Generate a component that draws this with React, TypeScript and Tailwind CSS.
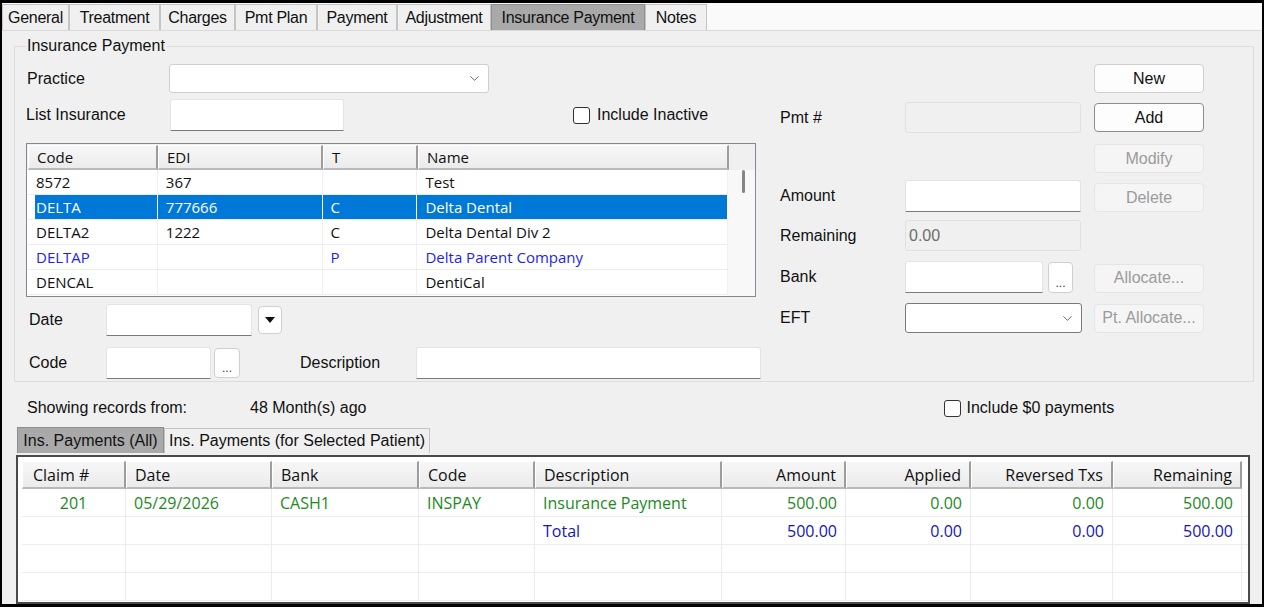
import { ChevronDown } from "lucide-react";

const tabs = [
  { label: "General", w: "w-[67px]" },
  { label: "Treatment", w: "w-[91px]" },
  { label: "Charges", w: "w-[75px]" },
  { label: "Pmt Plan", w: "w-[82px]" },
  { label: "Payment", w: "w-[80px]" },
  { label: "Adjustment", w: "w-[94px]" },
  { label: "Insurance Payment", w: "w-[154px]" },
  { label: "Notes", w: "w-[62px]" },
];

const insurers = [
  { code: "8572", edi: "367", t: "", name: "Test", kind: "normal" },
  { code: "DELTA", edi: "777666", t: "C", name: "Delta Dental", kind: "selected" },
  { code: "DELTA2", edi: "1222", t: "C", name: "Delta Dental Div 2", kind: "normal" },
  { code: "DELTAP", edi: "", t: "P", name: "Delta Parent Company", kind: "parent" },
  { code: "DENCAL", edi: "", t: "", name: "DentiCal", kind: "normal" },
];

const gridCols = [
  { label: "Claim #", w: "w-[104px]", align: "left" },
  { label: "Date", w: "w-[146px]", align: "left" },
  { label: "Bank", w: "w-[147px]", align: "left" },
  { label: "Code", w: "w-[116px]", align: "left" },
  { label: "Description", w: "w-[187px]", align: "left" },
  { label: "Amount", w: "w-[124px]", align: "right" },
  { label: "Applied", w: "w-[125px]", align: "right" },
  { label: "Reversed Txs", w: "w-[142px]", align: "right" },
  { label: "Remaining", w: "w-[129px]", align: "right" },
];

const gridRows = [
  { cells: ["201", "05/29/2026", "CASH1", "INSPAY", "Insurance Payment", "500.00", "0.00", "0.00", "500.00"], color: "text-[#1b8a1b]" },
  { cells: ["", "", "", "", "Total", "500.00", "0.00", "0.00", "500.00"], color: "text-[#1515b8]" },
  { cells: ["", "", "", "", "", "", "", "", ""], color: "" },
  { cells: ["", "", "", "", "", "", "", "", ""], color: "" },
];

const Checkbox = () => (
  <span className="w-[17px] h-[17px] border border-[#333] rounded-[3px] bg-white shrink-0" />
);

const TextBox = ({ className = "", value = "" }: { className?: string; value?: string }) => (
  <div
    className={
      "bg-white border border-[#e3e3e3] border-b-[#7a7a7a] rounded-t-[3px] flex items-center px-[6px] " +
      className
    }
  >
    {value}
  </div>
);

const DisabledBox = ({ className = "", value = "" }: { className?: string; value?: string }) => (
  <div
    className={
      "bg-[#f0f0f0] border border-[#e0e0e0] rounded-[3px] flex items-start pt-[3px] px-[3px] text-[#6d6d6d] " +
      className
    }
  >
    {value}
  </div>
);

const Button = ({
  children,
  disabled = false,
  focused = false,
}: {
  children: React.ReactNode;
  disabled?: boolean;
  focused?: boolean;
}) => (
  <div
    className={
      "w-[110px] h-[29px] rounded-[4px] border flex items-center justify-center " +
      (disabled
        ? "bg-[#f5f5f5] border-[#e5e5e5] text-[#9b9b9b]"
        : focused
          ? "bg-[#fdfdfd] border-[#8c8c8c] text-[#111]"
          : "bg-[#fdfdfd] border-[#cfcfcf] text-[#111]")
    }
  >
    {children}
  </div>
);

const EllipsisButton = ({ className = "" }: { className?: string }) => (
  <div
    className={
      "bg-white border border-[#cfcfcf] rounded-[4px] flex items-end justify-center pb-[3px] text-[12px] leading-none text-[#4a2a6a] " +
      className
    }
  >
    ...
  </div>
);

export default function App() {
  return (
    <div
      className="w-[1264px] h-[607px] bg-black px-[2px] pt-[3px] pb-[3px] overflow-hidden text-[16px] text-[#111]"
      style={{ fontFamily: '"Liberation Sans", Arial, sans-serif' }}
    >
      <div className="h-full bg-[#f0f0f0] flex flex-col overflow-hidden">
        {/* top tab strip */}
        <div className="h-[28px] bg-[#fafafa] border-b border-[#dadada] flex items-end shrink-0">
          {tabs.map((t) => (
            <div
              key={t.label}
              className={
                t.w +
                " h-[26px] flex items-center justify-center border border-b-0 tracking-[-0.3px] " +
                (t.label === "Insurance Payment" ? "bg-[#a9a9a9] border-[#8e8e8e]" : "bg-[#f0f0f0] border-[#c4c4c4]")
              }
            >
              {t.label}
            </div>
          ))}
        </div>

        {/* group box */}
        <fieldset className="mt-[6px] ml-[12px] mr-[8px] border border-[#dcdcdc] rounded-[2px] pl-[11px] pb-[2px] shrink-0">
          <legend className="px-[1px] h-[18px] leading-[18px]">Insurance Payment</legend>
          <div className="flex pt-[9px]">
            {/* left column */}
            <div className="w-[736px] flex flex-col shrink-0">
              <div className="h-[29px] flex items-center">
                <span className="w-[143px] pl-[1px]">Practice</span>
                <div className="w-[320px] h-[29px] bg-white border border-[#cfcfcf] rounded-[3px] flex items-center justify-end pr-[6px]">
                  <ChevronDown size={15} strokeWidth={1.4} color="#555" />
                </div>
              </div>
              <div className="h-[32px] mt-[6px] flex items-center">
                <span className="w-[144px]">List Insurance</span>
                <TextBox className="w-[174px] h-[32px]" />
                <div className="ml-[229px] flex items-center gap-[7px]">
                  <Checkbox />
                  <span>Include Inactive</span>
                </div>
              </div>

              {/* insurance list */}
              <div
                className="mt-[12px] w-[730px] h-[154px] border border-[#828790] bg-white flex flex-col overflow-hidden text-[15px]"
                style={{ fontFamily: '"Open Sans", "Noto Sans", sans-serif' }}
              >
                <div className="flex h-[26px] pl-[1px] pt-[1px] bg-[#f0f0f0] shrink-0">
                  {[
                    ["Code", "w-[130px]"],
                    ["EDI", "w-[165px]"],
                    ["T", "w-[95px]"],
                    ["Name", "w-[311px]"],
                  ].map(([l, w]) => (
                    <div
                      key={l}
                      className={
                        w +
                        " h-[25px] flex items-center pl-[8px] bg-gradient-to-b from-[#f7f7f7] to-[#ebebeb] border-l border-t border-white border-r-2 border-r-[#9d9d9d] border-b-2 border-b-[#b9b9b9]"
                      }
                    >
                      {l}
                    </div>
                  ))}
                  <div className="flex-1 bg-[#f0f0f0]" />
                </div>
                <div className="flex flex-1">
                  <div className="w-[701px] flex flex-col pl-[1px]">
                    {insurers.map((r) => {
                      const sel = r.kind === "selected";
                      const color = sel
                        ? "text-white"
                        : r.kind === "parent"
                          ? "text-[#1e1ef0]"
                          : "text-[#111]";
                      return (
                        <div
                          key={r.code}
                          className={"flex h-[25px] border-b border-[#ececec] " + color}
                        >
                          {[
                            [r.code, "w-[130px]"],
                            [r.edi, "w-[165px]"],
                            [r.t, "w-[95px]"],
                            [r.name, "w-[311px]"],
                          ].map(([v, w], i) => (
                            <div
                              key={i}
                              className={
                                w +
                                " h-full flex items-center pl-[8px] " +
                                (sel
                                  ? i === 0
                                    ? "bg-[linear-gradient(to_right,white_7px,#0078d7_7px)] border-r border-white"
                                    : "bg-[#0078d7] border-r border-white"
                                  : "border-r border-[#f0f0f0]")
                              }
                            >
                              {v}
                            </div>
                          ))}
                        </div>
                      );
                    })}
                  </div>
                  <div className="flex-1 bg-[#f8f8f8] flex justify-center">
                    <div className="w-[3px] h-[23px] bg-[#858585] rounded-full ml-[3px]" />
                  </div>
                </div>
              </div>

              <div className="h-[32px] mt-[7px] flex items-center">
                <span className="w-[80px] pl-[3px]">Date</span>
                <TextBox className="w-[146px] h-[32px]" />
                <div className="ml-[6px] w-[24px] h-[28px] bg-white border border-[#cfcfcf] rounded-[4px] flex items-center justify-center">
                  <span className="w-0 h-0 border-l-[5px] border-r-[5px] border-t-[6px] border-l-transparent border-r-transparent border-t-[#111]" />
                </div>
              </div>
              <div className="h-[32px] mt-[11px] flex items-center">
                <span className="w-[80px] pl-[3px]">Code</span>
                <TextBox className="w-[105px] h-[32px]" />
                <EllipsisButton className="ml-[3px] w-[26px] h-[30px]" />
                <span className="ml-[60px] w-[116px]">Description</span>
                <TextBox className="w-[345px] h-[32px]" />
              </div>
            </div>

            {/* right column */}
            <div className="ml-[18px] flex flex-col">
              <div className="h-[29px] flex items-center">
                <div className="ml-[314px]">
                  <Button>New</Button>
                </div>
              </div>
              <div className="h-[31px] mt-[9px] flex items-center">
                <span className="w-[125px]">Pmt #</span>
                <DisabledBox className="w-[176px] h-[31px]" />
                <div className="ml-[13px]">
                  <Button focused>Add</Button>
                </div>
              </div>
              <div className="h-[29px] mt-[11px] flex items-center">
                <div className="ml-[314px]">
                  <Button disabled>Modify</Button>
                </div>
              </div>
              <div className="h-[32px] mt-[7px] flex items-center">
                <span className="w-[125px]">Amount</span>
                <TextBox className="w-[176px] h-[32px]" />
                <div className="ml-[13px] mt-[3px]">
                  <Button disabled>Delete</Button>
                </div>
              </div>
              <div className="h-[31px] mt-[8px] flex items-center">
                <span className="w-[125px]">Remaining</span>
                <DisabledBox className="w-[176px] h-[31px]" value="0.00" />
              </div>
              <div className="h-[32px] mt-[10px] flex items-center">
                <span className="w-[125px]">Bank</span>
                <TextBox className="w-[138px] h-[32px]" />
                <EllipsisButton className="ml-[5px] w-[25px] h-[31px]" />
                <div className="ml-[21px] mt-[2px]">
                  <Button disabled>Allocate...</Button>
                </div>
              </div>
              <div className="h-[30px] mt-[10px] flex items-center">
                <span className="w-[125px]">EFT</span>
                <div className="w-[177px] h-[30px] bg-white border border-[#7a7a7a] rounded-[3px] flex items-center justify-end pr-[6px]">
                  <ChevronDown size={15} strokeWidth={1.4} color="#555" />
                </div>
                <div className="ml-[12px]">
                  <Button disabled>Pt. Allocate...</Button>
                </div>
              </div>
            </div>
          </div>
        </fieldset>

        {/* records filter row */}
        <div className="h-[20px] mt-[16px] flex items-center pl-[25px] shrink-0">
          <span className="w-[223px]">Showing records from:</span>
          <span>48 Month(s) ago</span>
          <div className="ml-[577px] flex items-center gap-[6px]">
            <Checkbox />
            <span>Include $0 payments</span>
          </div>
        </div>

        {/* sub tabs */}
        <div className="h-[26px] mt-[9px] flex items-end pl-[15px] shrink-0">
          <div className="w-[147px] h-[26px] flex items-center justify-center bg-[#a9a9a9] border border-b-0 border-[#8e8e8e]">
            Ins. Payments (All)
          </div>
          <div className="w-[266px] h-[25px] flex items-center justify-center bg-[#f0f0f0] border border-b-0 border-[#c4c4c4]">
            Ins. Payments (for Selected Patient)
          </div>
        </div>

        {/* payments grid */}
        <div
          className="mt-[2px] ml-[14px] w-[1234px] flex-1 bg-white border-2 border-[#4a4a4a] pt-[4px] pl-[4px] overflow-hidden text-[16px]"
          style={{ fontFamily: '"Open Sans", "Noto Sans", sans-serif' }}
        >
          <div className="flex h-[28px]">
            {gridCols.map((c) => (
              <div
                key={c.label}
                className={
                  c.w +
                  " h-full flex items-center px-[8px] bg-gradient-to-b from-[#f7f7f7] to-[#ebebeb] border-l border-t border-white border-r-2 border-r-[#9d9d9d] border-b-2 border-b-[#b9b9b9] " +
                  (c.label === "Claim #" ? "pl-[10px]" : c.align === "right" ? "justify-end" : "")
                }
              >
                {c.label}
              </div>
            ))}
          </div>
          {gridRows.map((r, ri) => (
            <div key={ri} className={"flex h-[28px] border-b border-[#ececec] " + r.color}>
              {r.cells.map((v, i) => (
                <div
                  key={i}
                  className={
                    gridCols[i].w +
                    " h-full flex items-center px-[8px] border-r border-[#ececec] " +
                    (i === 0 ? "justify-center" : gridCols[i].align === "right" ? "justify-end" : "")
                  }
                >
                  {v}
                </div>
              ))}
            </div>
          ))}
        </div>
      </div>
    </div>
  );
}
